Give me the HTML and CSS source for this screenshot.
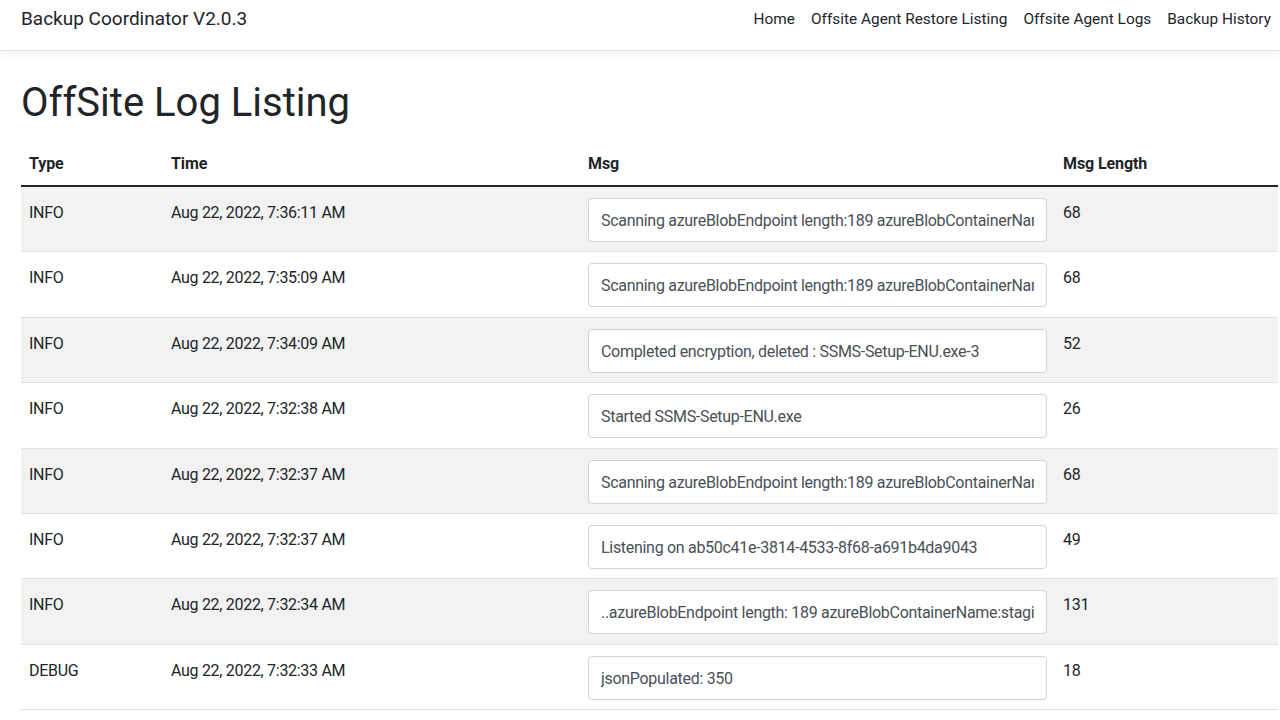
FILE: index.html
```html
<!DOCTYPE html>
<html lang="en">
<head>
<meta charset="utf-8">
<title>OffSite Log Listing</title>
<link rel="stylesheet" href="styles.css">
</head>
<body>
<header class="navbar">
  <a class="brand" href="#">Backup Coordinator V2.0.3</a>
  <nav class="nav">
    <a href="#">Home</a>
    <a href="#">Offsite Agent Restore Listing</a>
    <a href="#">Offsite Agent Logs</a>
    <a href="#">Backup History</a>
  </nav>
</header>
<main class="container">
  <h1 class="title">OffSite Log Listing</h1>
  <table class="log-table">
    <colgroup>
      <col class="c-type"><col class="c-time"><col class="c-msg"><col class="c-len">
    </colgroup>
    <thead>
      <tr><th>Type</th><th>Time</th><th>Msg</th><th>Msg Length</th></tr>
    </thead>
    <tbody>
      <tr><td>INFO</td><td>Aug 22, 2022, 7:36:11 AM</td><td><input class="msg" readonly value="Scanning azureBlobEndpoint length:189 azureBlobContainerName"></td><td>68</td></tr>
      <tr><td>INFO</td><td>Aug 22, 2022, 7:35:09 AM</td><td><input class="msg" readonly value="Scanning azureBlobEndpoint length:189 azureBlobContainerName"></td><td>68</td></tr>
      <tr><td>INFO</td><td>Aug 22, 2022, 7:34:09 AM</td><td><input class="msg" readonly value="Completed encryption, deleted : SSMS-Setup-ENU.exe-3"></td><td>52</td></tr>
      <tr><td>INFO</td><td>Aug 22, 2022, 7:32:38 AM</td><td><input class="msg" readonly value="Started SSMS-Setup-ENU.exe"></td><td>26</td></tr>
      <tr><td>INFO</td><td>Aug 22, 2022, 7:32:37 AM</td><td><input class="msg" readonly value="Scanning azureBlobEndpoint length:189 azureBlobContainerName"></td><td>68</td></tr>
      <tr><td>INFO</td><td>Aug 22, 2022, 7:32:37 AM</td><td><input class="msg" readonly value="Listening on ab50c41e-3814-4533-8f68-a691b4da9043"></td><td>49</td></tr>
      <tr><td>INFO</td><td>Aug 22, 2022, 7:32:34 AM</td><td><input class="msg" readonly value="..azureBlobEndpoint length: 189 azureBlobContainerName:staging"></td><td>131</td></tr>
      <tr><td>DEBUG</td><td>Aug 22, 2022, 7:32:33 AM</td><td><input class="msg" readonly value="jsonPopulated: 350"></td><td>18</td></tr>
    </tbody>
  </table>
</main>
</body>
</html>
```
FILE: styles.css
```css
html, body {
  margin: 0;
  padding: 0;
}
body {
  font-family: Roboto, "Noto Sans", sans-serif;
  font-size: 16px;
  letter-spacing: -0.3px;
  color: #212529;
  background: #fff;
  overflow: hidden;
}
a {
  color: inherit;
  text-decoration: none;
}
.navbar {
  height: 51px;
  box-sizing: border-box;
  border-bottom: 1px solid #e3e3e3;
  box-shadow: 0 3px 10px rgba(0, 0, 0, 0.05);
  display: flex;
  align-items: flex-start;
  justify-content: space-between;
  padding: 5px 1px 0 21px;
  position: relative;
  z-index: 1;
}
.brand {
  font-size: 19px;
  letter-spacing: 0;
  line-height: 28px;
  color: #212529;
}
.nav {
  display: flex;
  padding-top: 1px;
}
.nav a {
  padding: 0 8px;
  font-size: 15.4px;
  letter-spacing: 0;
  line-height: 26px;
  color: #212529;
}
.container {
  padding: 0 2px 0 21px;
}
.title {
  margin: 28px 0 12px;
  font-size: 40px;
  font-weight: 400;
  letter-spacing: 0;
  line-height: 48px;
}
.log-table {
  width: 100%;
  border-collapse: collapse;
  table-layout: fixed;
}
.c-type { width: 142px; }
.c-time { width: 417px; }
.c-msg { width: 475px; }
.log-table th {
  text-align: left;
  font-weight: 700;
  letter-spacing: -0.1px;
  padding: 10px 8px 6px;
  line-height: 30px;
  border-bottom: 2px solid #212529;
}
.log-table td {
  padding: 11px 8px 9.4px;
  line-height: 30px;
  vertical-align: top;
  border-top: 1px solid #dee2e6;
}
.log-table tbody tr:nth-child(odd) {
  background: #f2f2f2;
}
.log-table tbody tr:first-child td {
  border-top: 0;
}
.log-table tbody tr:last-child td {
  border-bottom: 1px solid #dee2e6;
}
.msg {
  display: block;
  box-sizing: border-box;
  width: 100%;
  height: 44px;
  padding: 1px 12px 0;
  font: inherit;
  letter-spacing: -0.3px;
  line-height: 40px;
  color: #495057;
  background: #fff;
  border: 1px solid #ced4da;
  border-radius: 4px;
  outline: none;
}
```
